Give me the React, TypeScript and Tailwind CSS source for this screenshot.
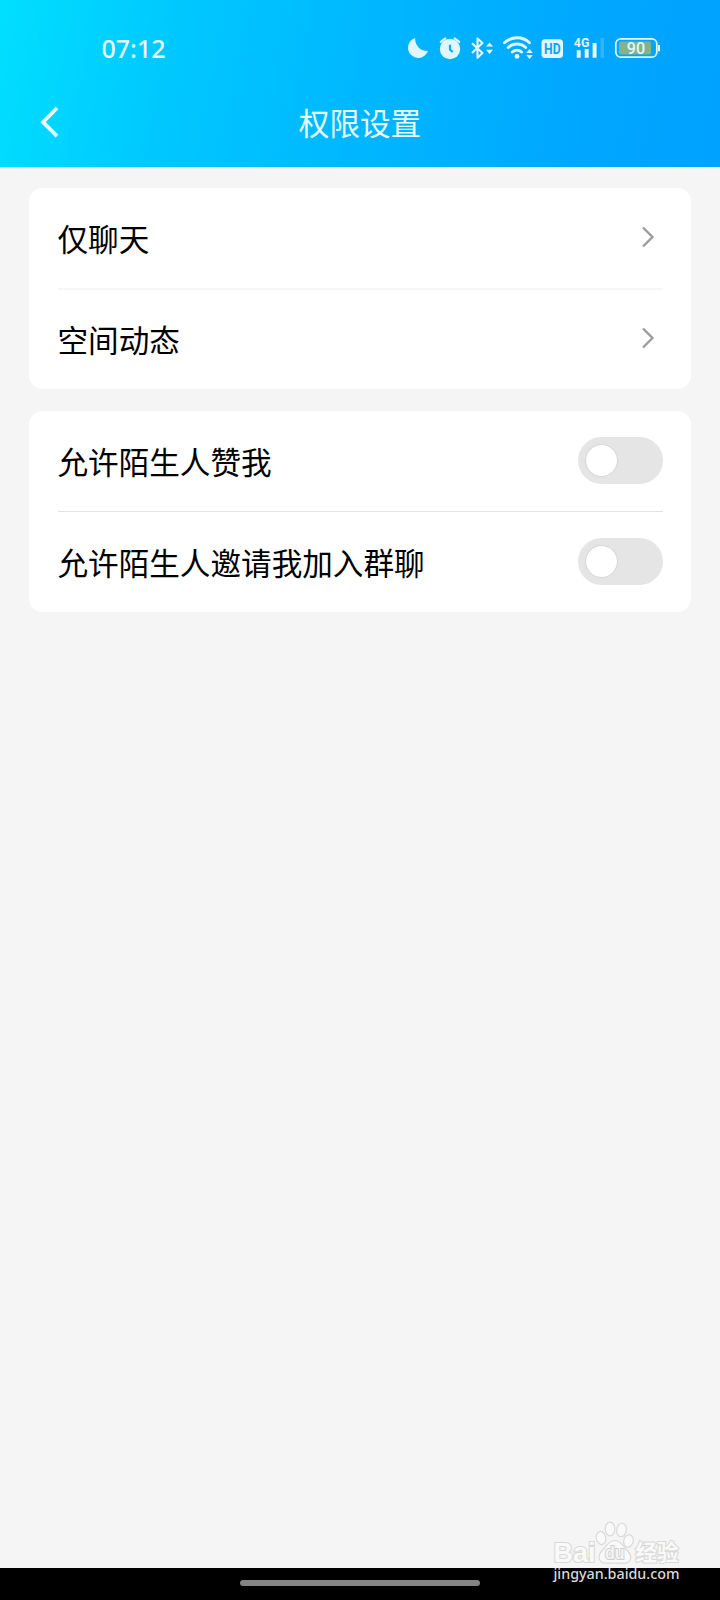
import type { ReactNode } from "react";

function StatusIcons() {
  return (
    <svg width="256" height="30" viewBox="404 33 256 30" fill="none" className="text-[#e0f7ff]" stroke="currentColor">
      {/* moon */}
      <path d="M415.200 38A10.200 10.200 0 1 0 427.900 51A12 12 0 0 1 415.200 38Z" fill="currentColor" stroke="none" />
      {/* alarm clock */}
      <circle cx="450" cy="49" r="10.200" fill="currentColor" stroke="none" />
      <path d="M440.800 41.800l4.500-3.400M454.700 38.400l4.500 3.400" strokeWidth="2.200" strokeLinecap="round" />
      <path d="M450 44.800v4.700l2.700 2.500" stroke="#03aefb" strokeWidth="2.200" />
      {/* bluetooth */}
      <path d="M472 43.300l10.500 9.700-5 4.800V38.400l5 4.600L472 53" strokeWidth="2.100" strokeLinejoin="round" />
      <path d="M486 46.600l3.500-4.200 3.500 4.200ZM486 49.800l3.500 4.200 3.500-4.200Z" fill="currentColor" stroke="none" />
      {/* wifi */}
      <path d="M504.500 42.800a18 18 0 0 1 25 0M508.300 47.500a12.400 12.400 0 0 1 17.400 0M512.400 52a7 7 0 0 1 9.200 0" strokeWidth="2.900" strokeLinecap="round" />
      <circle cx="517" cy="56.400" r="2.400" fill="currentColor" stroke="none" />
      <path d="M526.200 53l3.300-4 3.300 4ZM526.200 55l3.300 4 3.300-4Z" fill="currentColor" stroke="none" />
      {/* hd */}
      <rect x="541.500" y="39.300" width="21.500" height="18.700" rx="3.500" fill="currentColor" stroke="none" />
      <text x="552.300" y="54.300" textAnchor="middle" textLength="16.500" lengthAdjust="spacingAndGlyphs" fill="#03a6fb" stroke="none" className="font-[Roboto] text-[15.500px] font-bold">HD</text>
      {/* signal */}
      <text x="573.800" y="47" textLength="15.500" lengthAdjust="spacingAndGlyphs" fill="currentColor" stroke="none" className="font-[Roboto] text-[13px] font-bold">4G</text>
      <path d="M578.700 50.300v7.500M586.700 49v8.800M594.600 43v14.800" strokeWidth="4" />
      <path d="M602.300 38v19.800" strokeWidth="3.600" opacity=".2" />
      {/* battery */}
      <rect x="615.800" y="38.800" width="41" height="18.400" rx="5" strokeWidth="1.700" />
      <rect x="619" y="41.400" width="32" height="13" rx="2" fill="#83b388" stroke="none" />
      <path d="M659 45v6.200" strokeWidth="2" />
      <text x="636" y="53.800" textAnchor="middle" textLength="18.500" lengthAdjust="spacingAndGlyphs" fill="currentColor" stroke="none" className="font-[Roboto] text-[16px] font-medium">90</text>
    </svg>
  );
}

function Row({ label, children }: { label: string; children: ReactNode }) {
  return (
    <div className="flex h-[100px] items-center justify-between">
      <span className="text-[30.600px] leading-[44px] text-black">{label}</span>
      {children}
    </div>
  );
}

function Chevron() {
  return (
    <svg width="14" height="22" viewBox="0 0 14 22" className="mr-[8px] mb-[2px]" fill="none" stroke="#9c9c9c" strokeWidth="2.400">
      <path d="M2 1.500l9.500 9.500L2 20.500" />
    </svg>
  );
}

function Toggle() {
  return (
    <button role="switch" aria-checked="false" className="mb-px flex h-[47px] w-[85px] items-center rounded-full bg-[#e5e5e5] pl-2">
      <span className="size-[31px] rounded-full bg-white shadow-[0_0_1px_0.500px_#c8c8c8]" />
    </button>
  );
}

function Watermark() {
  return (
    <div className="absolute top-[1520px] left-[550px] h-[66px] w-[135px]">
      <svg width="135" height="66" viewBox="550 1520 135 66" fill="#f9f9f9" stroke="#d9d9d9" strokeWidth="1.200" className="overflow-visible">
        <text x="553.500" y="1561.500" textLength="42" lengthAdjust="spacingAndGlyphs" strokeWidth="2.200" paintOrder="stroke" className="font-['Liberation_Sans'] text-[28px] font-bold">Bai</text>
        <ellipse cx="601" cy="1538" rx="4.800" ry="6.600" transform="rotate(-12 601 1538)" />
        <ellipse cx="610" cy="1529" rx="4.800" ry="6.800" />
        <ellipse cx="621.500" cy="1530" rx="4.800" ry="6.800" transform="rotate(8 621.500 1530)" />
        <ellipse cx="628.500" cy="1541" rx="4.800" ry="6.300" transform="rotate(12 628.500 1541)" />
        <path d="M615 1540.500c-6 0-8 5-11.500 8.500-4 4-5.500 7-4 10.500 2 5 7 3.500 15.500 3.500s13.500 1.500 15.500-3.500c1.500-4-1-7-4.500-10.500-3.500-3.500-5-8.500-11-8.500Z" />
        <text x="605" y="1559" textLength="19.500" lengthAdjust="spacingAndGlyphs" fill="#f4f4f4" stroke="#cfcfcf" strokeWidth="2" paintOrder="stroke" className="font-['Liberation_Sans'] text-[18px] font-bold">du</text>
        <text x="635.500" y="1560" textLength="43" lengthAdjust="spacingAndGlyphs" strokeWidth="2.200" paintOrder="stroke" className="font-['Noto_Sans_CJK_SC'] text-[21.500px] font-bold">经验</text>
        <text x="553.500" y="1579" textLength="126" lengthAdjust="spacingAndGlyphs" fill="#dadada" stroke="none" className="font-['Noto_Sans'] text-[15px] font-medium">jingyan.baidu.com</text>
      </svg>
    </div>
  );
}

export default function App() {
  return (
    <div className="relative flex h-[1600px] w-[720px] flex-col overflow-hidden bg-[#f5f5f5] font-['Noto_Sans_CJK_SC',sans-serif]">
      <header className="h-[166.500px] shrink-0 bg-[linear-gradient(101deg,#00dfff_0%,#00c8ff_24%,#00b6ff_52%,#00a6ff_82%,#00a2ff_100%)] text-[#e8faff]">
        <div className="flex h-[96px] items-center justify-between pr-[60px] pl-[101.500px]">
          <span className="font-['Noto_Sans'] text-[25px] leading-[36px] font-medium">07:12</span>
          <StatusIcons />
        </div>
        <div className="grid h-[51px] grid-cols-[80px_1fr_80px] items-center">
          <svg width="22" height="32" viewBox="0 0 22 32" className="ml-[39px]" fill="none" stroke="currentColor" strokeWidth="3.800">
            <path d="M18 2L4 16.200l14 14" />
          </svg>
          <h1 className="text-center text-[30.600px] leading-[44px]">权限设置</h1>
        </div>
      </header>
      <main className="flex grow flex-col gap-[22px] px-[29px] pt-[21.500px]">
        <section className="h-[201px] rounded-[14px] bg-white px-[28.500px]">
          <Row label="仅聊天"><Chevron /></Row>
          <div className="-mb-px h-[2px] bg-[#f6f6f6]" />
          <Row label="空间动态"><Chevron /></Row>
        </section>
        <section className="rounded-[14px] bg-white px-[28.500px]">
          <Row label="允许陌生人赞我"><Toggle /></Row>
          <div className="h-px bg-[#e2e2e2]" />
          <Row label="允许陌生人邀请我加入群聊"><Toggle /></Row>
        </section>
      </main>
      <footer className="flex h-[32px] shrink-0 justify-center bg-black pt-[12px]">
        <div className="h-[6px] w-[240px] rounded-full bg-[#848484]" />
      </footer>
      <Watermark />
    </div>
  );
}
